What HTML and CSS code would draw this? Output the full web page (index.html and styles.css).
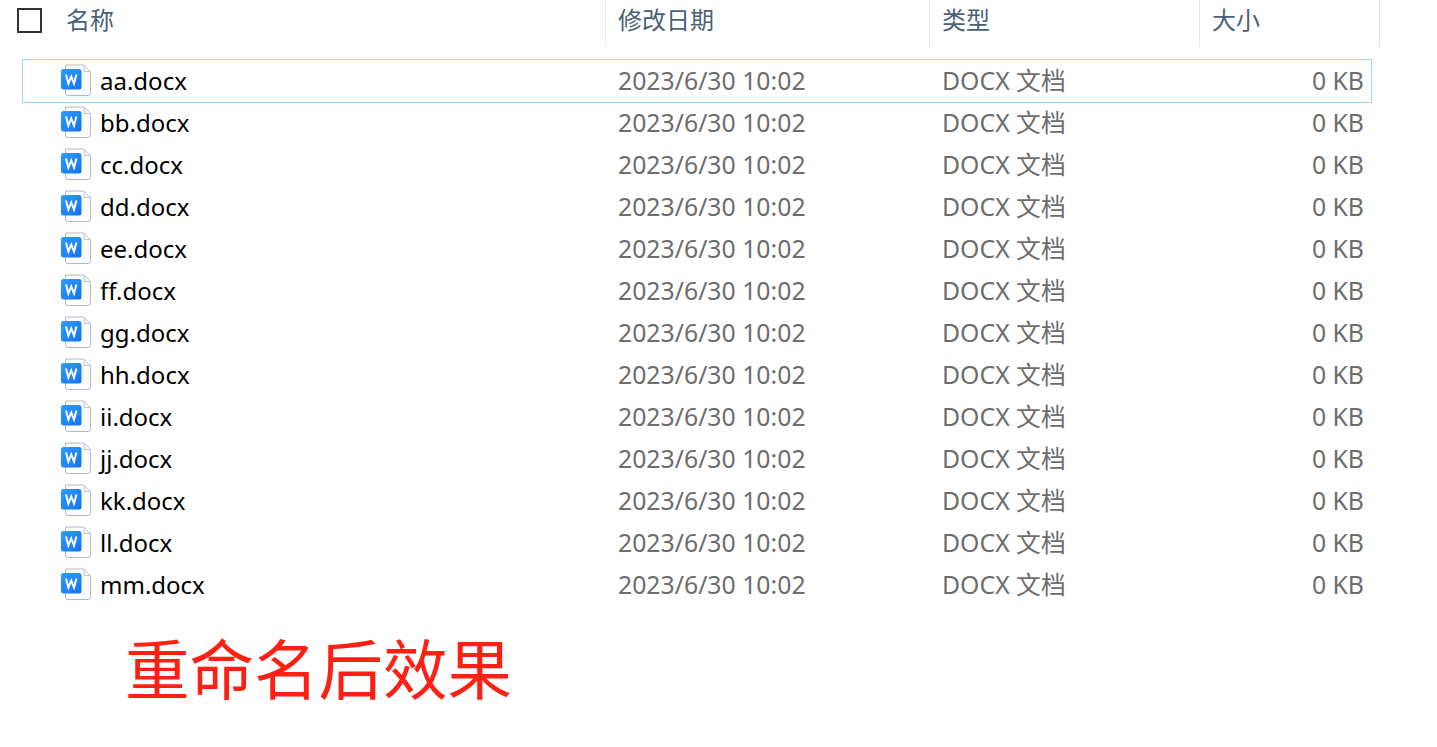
FILE: index.html
```html
<!DOCTYPE html>
<html lang="zh-CN">
<head>
<meta charset="utf-8">
<title>重命名后效果</title>
<link rel="stylesheet" href="styles.css">
</head>
<body>
<svg class="defs" width="0" height="0" aria-hidden="true">
  <defs>
    <linearGradient id="wps" x1="0" y1="0" x2="1" y2="1">
      <stop offset="0" stop-color="#2a9dff"/>
      <stop offset="1" stop-color="#1672ee"/>
    </linearGradient>
  </defs>
  <symbol id="docx" viewBox="0 0 30 33">
    <path d="M4.500 1h18.500l6.500 6.500v22a2 2 0 0 1-2 2H6.500a2 2 0 0 1-2-2z" fill="#fbfcfe" stroke="#b4bac4" stroke-width="1"/>
    <path d="M23 1v6.500h6.500z" fill="#f1f3f6" stroke="#c4c9d1" stroke-width="1"/>
    <rect x="0" y="5" width="20.500" height="20.500" rx="2.500" fill="url(#wps)"/>
    <path d="M5 10.500l2.400 9 2.800-7 2.800 7 2.400-9" fill="none" stroke="#fff" stroke-width="2"/>
  </symbol>
</svg>
<div class="header">
  <div class="hcell hname"><span class="checkbox"></span><span>名称</span></div>
  <div class="hcell hdate">修改日期</div>
  <div class="hcell htype">类型</div>
  <div class="hcell hsize">大小</div>
</div>
<div class="list">
  <div class="row selected"><svg class="icon"><use href="#docx"/></svg><span class="name">aa.docx</span><span class="meta">2023/6/30 10:02</span><span class="meta">DOCX 文档</span><span class="meta size">0 KB</span></div>
  <div class="row"><svg class="icon"><use href="#docx"/></svg><span class="name">bb.docx</span><span class="meta">2023/6/30 10:02</span><span class="meta">DOCX 文档</span><span class="meta size">0 KB</span></div>
  <div class="row"><svg class="icon"><use href="#docx"/></svg><span class="name">cc.docx</span><span class="meta">2023/6/30 10:02</span><span class="meta">DOCX 文档</span><span class="meta size">0 KB</span></div>
  <div class="row"><svg class="icon"><use href="#docx"/></svg><span class="name">dd.docx</span><span class="meta">2023/6/30 10:02</span><span class="meta">DOCX 文档</span><span class="meta size">0 KB</span></div>
  <div class="row"><svg class="icon"><use href="#docx"/></svg><span class="name">ee.docx</span><span class="meta">2023/6/30 10:02</span><span class="meta">DOCX 文档</span><span class="meta size">0 KB</span></div>
  <div class="row"><svg class="icon"><use href="#docx"/></svg><span class="name">ff.docx</span><span class="meta">2023/6/30 10:02</span><span class="meta">DOCX 文档</span><span class="meta size">0 KB</span></div>
  <div class="row"><svg class="icon"><use href="#docx"/></svg><span class="name">gg.docx</span><span class="meta">2023/6/30 10:02</span><span class="meta">DOCX 文档</span><span class="meta size">0 KB</span></div>
  <div class="row"><svg class="icon"><use href="#docx"/></svg><span class="name">hh.docx</span><span class="meta">2023/6/30 10:02</span><span class="meta">DOCX 文档</span><span class="meta size">0 KB</span></div>
  <div class="row"><svg class="icon"><use href="#docx"/></svg><span class="name">ii.docx</span><span class="meta">2023/6/30 10:02</span><span class="meta">DOCX 文档</span><span class="meta size">0 KB</span></div>
  <div class="row"><svg class="icon"><use href="#docx"/></svg><span class="name">jj.docx</span><span class="meta">2023/6/30 10:02</span><span class="meta">DOCX 文档</span><span class="meta size">0 KB</span></div>
  <div class="row"><svg class="icon"><use href="#docx"/></svg><span class="name">kk.docx</span><span class="meta">2023/6/30 10:02</span><span class="meta">DOCX 文档</span><span class="meta size">0 KB</span></div>
  <div class="row"><svg class="icon"><use href="#docx"/></svg><span class="name">ll.docx</span><span class="meta">2023/6/30 10:02</span><span class="meta">DOCX 文档</span><span class="meta size">0 KB</span></div>
  <div class="row"><svg class="icon"><use href="#docx"/></svg><span class="name">mm.docx</span><span class="meta">2023/6/30 10:02</span><span class="meta">DOCX 文档</span><span class="meta size">0 KB</span></div>
</div>
<div class="caption">重命名后效果</div>
</body>
</html>
```
FILE: styles.css
```css
* { box-sizing: border-box; }
html, body { margin: 0; padding: 0; background: #fff; overflow: hidden; }
body {
  width: 1437px;
  height: 747px;
  font-family: "Noto Sans", "Noto Sans CJK SC", sans-serif;
  font-size: 24px;
}
.defs { position: absolute; }
.header { display: flex; height: 47px; color: #4c607a; }
.hcell {
  display: flex;
  align-items: flex-start;
  height: 47px;
  line-height: 40px;
  border-right: 1px solid #e6e6e6;
  padding-left: 12px;
}
.hname { width: 606px; padding-left: 17px; border-right: 1px solid #ececec; }
.hdate { width: 324px; }
.htype { width: 270px; }
.hsize { width: 180px; }
.checkbox {
  width: 25px;
  height: 25px;
  margin: 8px 24px 0 0;
  border: 2px solid #333;
  flex: none;
}
.list { margin: 12px 0 0 22px; width: 1350px; }
.row {
  display: grid;
  grid-template-columns: 39px 518px 324px 240px 1fr;
  grid-template-rows: 42px;
  padding-left: 39px;
  height: 42px;
  align-items: center;
  white-space: nowrap;
  line-height: 38px;
}
.selected {
  outline: 1px solid #99d1ff;
  outline-offset: -1px;
  height: 44px;
  padding-top: 1px;
  margin-bottom: -1px;
}
.icon { width: 30px; height: 33px; margin-top: -1px; }
.name { color: #000; }
.meta { color: #6d6d6d; font-size: 24.800px; margin-bottom: 2px; }
.size { text-align: right; padding-right: 8px; }
.caption {
  margin: 15px 0 0 125px;
  font-size: 64.500px;
  line-height: 90px;
  color: #ff2013;
  font-family: "Noto Sans CJK SC", sans-serif;
}
```
